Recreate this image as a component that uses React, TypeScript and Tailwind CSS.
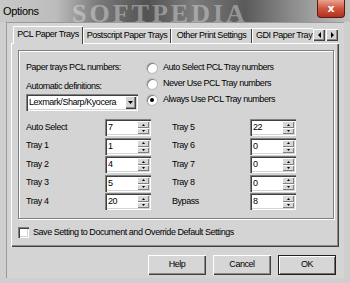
import React from 'react';

const raised =
  'shadow-[inset_1px_1px_0_#ffffff,inset_-1px_-1px_0_#404040,inset_-2px_-2px_0_#8a8a8a]';
const sunken =
  'shadow-[inset_1px_1px_0_#808080,inset_2px_2px_0_#404040,inset_-1px_-1px_0_#ffffff,inset_-2px_-2px_0_#d4d4d4]';
const spinBtn = 'shadow-[inset_1px_1px_0_#ffffff,inset_-1px_-1px_0_#808080]';

const Arrow: React.FC<{ dir: 'up' | 'down' | 'left' | 'right'; w?: number; h?: number }> = ({ dir, w = 5, h = 3 }) => {
  const pts =
    dir === 'up'
      ? `0,${h} ${w},${h} ${w / 2},0`
      : dir === 'down'
      ? `0,0 ${w},0 ${w / 2},${h}`
      : dir === 'left'
      ? `${w},0 ${w},${h} 0,${h / 2}`
      : `0,0 0,${h} ${w},${h / 2}`;
  return (
    <svg width={w} height={h} viewBox={`0 0 ${w} ${h}`} className="block">
      <polygon points={pts} fill="#000" />
    </svg>
  );
};

const Spin: React.FC<{ value: string }> = ({ value }) => (
  <div className={`flex h-[17px] w-[46px] bg-white ${sunken}`}>
    <span className="pl-[3px] pt-[2px] leading-[13px]">{value}</span>
    <div className="ml-auto flex flex-col pr-[2px] pt-[2px]">
      <div className={`flex h-[7px] w-[12px] items-center justify-center bg-[#d8d8d8] ${spinBtn}`}>
        <Arrow dir="up" w={3} h={2} />
      </div>
      <div className={`flex h-[6px] w-[12px] items-center justify-center bg-[#d8d8d8] ${spinBtn}`}>
        <Arrow dir="down" w={3} h={2} />
      </div>
    </div>
  </div>
);

const Radio: React.FC<{ label: string; checked?: boolean }> = ({ label, checked }) => (
  <div className="flex h-[16px] items-center">
    <div className="flex h-[10px] w-[10px] items-center justify-center rounded-full bg-white shadow-[inset_1px_1px_0_#808080,0_0_0_1px_#bdbdbd]">
      {checked && <div className="h-[4px] w-[4px] rounded-full bg-black" />}
    </div>
    <span className="ml-[6px]">{label}</span>
  </div>
);

const Btn: React.FC<{ label: string; primary?: boolean }> = ({ label, primary }) => (
  <div
    className={`flex h-[20px] w-[58px] items-center justify-center bg-[#d6d6d6] ${
      primary
        ? 'shadow-[inset_0_0_0_1px_#202020,inset_2px_2px_0_#ffffff,inset_-2px_-2px_0_#707070]'
        : raised
    }`}
  >
    {label}
  </div>
);

const leftRows = [
  ['Auto Select', '7'],
  ['Tray 1', '1'],
  ['Tray 2', '4'],
  ['Tray 3', '5'],
  ['Tray 4', '20'],
];
const rightRows = [
  ['Tray 5', '22'],
  ['Tray 6', '0'],
  ['Tray 7', '0'],
  ['Tray 8', '0'],
  ['Bypass', '8'],
];

export default function App() {
  return (
    <div className="flex h-[283px] w-[350px] flex-col overflow-hidden whitespace-nowrap bg-[#cfcfcf] font-['Liberation_Sans',Arial,sans-serif] text-[9px] tracking-[-0.45px] text-black">
      {/* title bar */}
      <div className="relative flex h-[22px] shrink-0 items-start bg-[linear-gradient(90deg,#c8c8c8_0%,#bcbcbc_16%,#7a7a7a_28%,#525252_42%,#7c7c7c_55%,#5a5a5a_70%,#8e8e8e_84%,#c2c2c2_100%)]">
        <span className="pointer-events-none absolute left-[72px] top-[-6px] font-['Liberation_Serif',serif] text-[26px] font-bold tracking-[3px] text-white/35">
          SOFTPEDIA
        </span>
        <span className="relative pl-[3px] pt-[3px] text-[11px] tracking-[-0.3px]">Options</span>
        <div className="relative ml-auto mr-[5px] flex h-[18px] w-[28px] items-center justify-center rounded-b-[4px] border border-t-0 border-[#5a1a14] bg-[linear-gradient(180deg,#e9a394_0%,#d0553f_50%,#b3301d_100%)] font-['DejaVu_Sans',sans-serif] text-[11px] font-bold leading-none tracking-normal text-white">
          x
        </div>
      </div>

      {/* client area */}
      <div className="mx-[6px] flex flex-1 flex-col bg-[#d4d4d4] px-[5px] pt-[4px] shadow-[inset_1px_1px_0_#9a9a9a]">
        {/* tabs */}
        <div className="relative z-10 flex h-[17px] items-end">
          <div className="ml-[2px] flex h-[18px] w-[70px] translate-y-[1px] items-center justify-center bg-[#d4d4d4] shadow-[inset_1px_1px_0_#ffffff,inset_-1px_0_0_#404040]">
            PCL Paper Trays
          </div>
          <div className="flex h-[15px] w-[88px] items-center justify-center shadow-[inset_1px_1px_0_#ffffff,inset_-1px_0_0_#404040]">
            Postscript Paper Trays
          </div>
          <div className="flex h-[15px] w-[81px] items-center justify-center shadow-[inset_1px_1px_0_#ffffff,inset_-1px_0_0_#404040]">
            Other Print Settings
          </div>
          <div className="flex h-[15px] w-[61px] items-center overflow-hidden pl-[4px] shadow-[inset_1px_1px_0_#ffffff]">
            GDI Paper Tray
          </div>
          <div className="mb-[2px] flex gap-[1px] self-end">
            <div className={`flex h-[12px] w-[12px] items-center justify-center bg-[#d4d4d4] ${raised}`}>
              <Arrow dir="left" w={3} h={6} />
            </div>
            <div className={`flex h-[12px] w-[12px] items-center justify-center bg-[#d4d4d4] ${raised}`}>
              <Arrow dir="right" w={3} h={6} />
            </div>
          </div>
        </div>

        {/* tab panel */}
        <div className={`flex h-[204px] w-[328px] flex-col pl-[7px] pr-[5px] pt-[7px] ${raised}`}>
          <div className="h-[169px] border border-[#808080] pl-[7px] shadow-[1px_1px_0_#ffffff,inset_1px_1px_0_#ffffff]">
            <div className="flex">
              <div className="flex w-[112px] flex-col pt-[10px]">
                <div className="h-[12px] leading-[12px]">Paper trays PCL numbers:</div>
                <div className="mt-[7px] h-[12px] leading-[12px]">Automatic definitions:</div>
                <div className={`mt-[2px] flex h-[17px] w-[112px] bg-white ${sunken}`}>
                  <span className="pl-[3px] leading-[17px]">Lexmark/Sharp/Kyocera</span>
                  <div className="ml-auto pr-[2px] pt-[2px]">
                    <div className={`flex h-[13px] w-[11px] items-center justify-center bg-[#d4d4d4] ${raised}`}>
                      <Arrow dir="down" w={5} h={3} />
                    </div>
                  </div>
                </div>
              </div>
              <div className="ml-[9px] flex flex-col pt-[9px]">
                <Radio label="Auto Select PCL Tray numbers" />
                <Radio label="Never Use PCL Tray numbers" />
                <Radio label="Always Use PCL Tray numbers" checked />
              </div>
            </div>

            <div className="mt-[8px] flex">
              <div className="flex w-[125px] flex-col gap-[1.5px]">
                {leftRows.map(([l, v]) => (
                  <div key={l} className="flex h-[17px] items-center">
                    <span className="w-[79px]">{l}</span>
                    <Spin value={v} />
                  </div>
                ))}
              </div>
              <div className="ml-[21px] flex w-[124px] flex-col gap-[1.5px]">
                {rightRows.map(([l, v]) => (
                  <div key={l} className="flex h-[17px] items-center">
                    <span className="w-[78px]">{l}</span>
                    <Spin value={v} />
                  </div>
                ))}
              </div>
            </div>
          </div>

          <div className="mt-[8px] flex h-[11px] items-center">
            <div className={`h-[11px] w-[11px] bg-white ${sunken}`} />
            <span className="ml-[4px]">Save Setting to Document and Override Default Settings</span>
          </div>
        </div>

        {/* buttons */}
        <div className="mt-[8px] flex justify-end gap-[7px] pr-[3px]">
          <Btn label="Help" />
          <Btn label="Cancel" />
          <Btn label="OK" primary />
        </div>
      </div>
      <div className="h-[5px] shrink-0" />
    </div>
  );
}
